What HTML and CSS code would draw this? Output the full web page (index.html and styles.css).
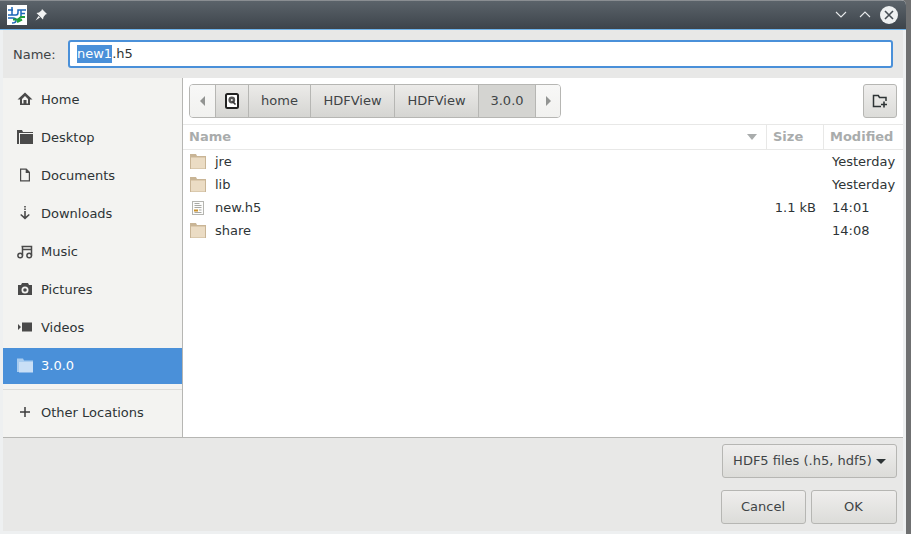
FILE: index.html
```html
<!DOCTYPE html>
<html lang="en">
<head>
<meta charset="utf-8">
<title>HDFView save dialog</title>
<link rel="stylesheet" href="styles.css">
</head>
<body>
<div class="screen">
  <div class="frame">
    <header class="titlebar">
      <svg class="logo" width="20" height="20" viewBox="0 0 20 20">
        <rect width="20" height="20" fill="#fff"/>
        <path d="M1 5h5M5 2v8M1 10h8q2 0 2-2.500V5h8M14 5v7M14 8.500h4" fill="none" stroke="#1c68b8" stroke-width="1.500"/>
        <path d="M1 13h5q3 0 3 2.500T5 18" fill="none" stroke="#1c68b8" stroke-width="1.500"/>
        <path d="M6 14.500h5l3-2.500h4M10 17l5-2.500" fill="none" stroke="#1f9e3c" stroke-width="2"/>
      </svg>
      <svg class="pin" width="12" height="12" viewBox="0 0 12 12"><path d="M7 0l5 5-1.500 .5L8.500 8 8 10.500 1.500 4 4 3.500 6.500 1.500zM3.500 7 .5 11.500 5 8.500z" fill="#f2f3f3"/></svg>
      <div class="wm-buttons">
        <svg width="14" height="14" viewBox="0 0 14 14"><path d="M2 4l5 5 5-5" fill="none" stroke="#e6e8ea" stroke-width="1.100"/></svg>
        <svg width="14" height="14" viewBox="0 0 14 14"><path d="M2 9l5-5 5 5" fill="none" stroke="#e6e8ea" stroke-width="1.100"/></svg>
        <svg class="wm-close" width="18" height="18" viewBox="0 0 18 18"><circle cx="9" cy="9" r="9" fill="#eef0f1"/><path d="M5 5l8 8M13 5l-8 8" stroke="#474e55" stroke-width="1.600"/></svg>
      </div>
    </header>
    <div class="dialog">
      <div class="name-row">
        <label class="name-label">Name:</label>
        <div class="name-input"><span class="sel">new1</span>.h5</div>
      </div>
      <div class="middle">
        <aside class="sidebar">
          <ul class="places">
            <li class="place"><svg class="ico" width="16" height="16" viewBox="0 0 16 16"><path d="M8 1.500 .5 8.500h2.500V14h10V8.500h2.500zM5 8l3-3 3 3v4.500H9.500V9h-3v3.500H5z" fill="#4a4a4a" fill-rule="evenodd"/></svg>Home</li>
            <li class="place"><svg class="ico" width="16" height="16" viewBox="0 0 16 16"><path d="M0 1h5l1 2H16v1H2v11H0zM3 5h13v10H3z" fill="#4a4a4a"/></svg>Desktop</li>
            <li class="place"><svg class="ico" width="16" height="16" viewBox="0 0 16 16"><path d="M3 1.500h6.500L13 5v9.500H3zM4.200 2.700v10.600h7.600V6H8.700V2.700z" fill="#4a4a4a" fill-rule="evenodd"/></svg>Documents</li>
            <li class="place"><svg class="ico" width="16" height="16" viewBox="0 0 16 16"><path d="M7.200 1h1.600v1.500H7.200zM7.200 3.500h1.600V5H7.200zM7.200 6h1.600v5.500l3-2.500 1 1L8 14.500 3.200 10l1-1 3 2.500z" fill="#4a4a4a"/></svg>Downloads</li>
            <li class="place"><svg class="ico" width="16" height="16" viewBox="0 0 16 16"><path d="M4.500 3.500h10v9M5.500 3.500v9M5.500 6.500h9" fill="none" stroke="#4a4a4a" stroke-width="1.500"/><circle cx="3.200" cy="12.500" r="2.300" fill="none" stroke="#4a4a4a" stroke-width="1.500"/><circle cx="12.200" cy="12.500" r="2.300" fill="none" stroke="#4a4a4a" stroke-width="1.500"/></svg>Music</li>
            <li class="place"><svg class="ico" width="16" height="16" viewBox="0 0 16 16"><path d="M1 4h3l1-2h6l1 2h3v10H1zM8 5.500a3.500 3.500 0 1 0 0 7 3.500 3.500 0 0 0 0-7zM8 7.200a1.800 1.800 0 1 1 0 3.600 1.800 1.800 0 0 1 0-3.600z" fill="#4a4a4a" fill-rule="evenodd"/></svg>Pictures</li>
            <li class="place"><svg class="ico" width="16" height="16" viewBox="0 0 16 16"><path d="M5 3.500h10v9H5zM1 5l3 3-3 3z" fill="#4a4a4a"/></svg>Videos</li>
            <li class="place place-active"><svg class="ico" width="16" height="16" viewBox="0 0 16 16"><path d="M0 1.500h6l1 2h9v2H2V15H0z" fill="#a8ccf0"/><path d="M2 5h14v10.500H2z" fill="#c9dff6"/></svg>3.0.0</li>
          </ul>
          <div class="side-sep"></div>
          <div class="place place-other"><svg class="ico" width="16" height="16" viewBox="0 0 16 16"><path d="M3 8h10M8 3v10" stroke="#3c3c3c" stroke-width="1.500"/></svg>Other Locations</div>
        </aside>
        <main class="browser">
          <div class="toolbar">
            <nav class="pathbar">
              <div class="seg seg-nav seg-first"><span class="tri tri-left"></span></div>
              <div class="seg seg-dark seg-disk"><svg width="16" height="16" viewBox="0 0 16 16"><rect x="2" y="1" width="12" height="14" rx="1.500" fill="#fff" stroke="#222" stroke-width="2"/><circle cx="7.800" cy="7" r="3.400" fill="#555"/><circle cx="7.800" cy="7" r="1" fill="#eee"/><path d="M8.500 8.500l3 3" stroke="#333" stroke-width="1.600"/></svg></div>
              <div class="seg seg-dark seg-home">home</div>
              <div class="seg seg-dark seg-hdf">HDFView</div>
              <div class="seg seg-dark seg-hdf">HDFView</div>
              <div class="seg seg-current">3.0.0</div>
              <div class="seg seg-nav seg-last"><span class="tri tri-right"></span></div>
            </nav>
            <button class="new-folder"><svg width="16" height="16" viewBox="0 0 16 16"><path d="M9 13.500H1.500V2.500h4.800l1.200 2h6.500V8" fill="none" stroke="#2e3436" stroke-width="1.500"/><path d="M12 8.500v6M9 11.500h6" stroke="#2e3436" stroke-width="1.600"/></svg></button>
          </div>
          <div class="table-head">
            <div class="th th-name">Name<span class="sort-arrow"></span></div>
            <div class="th th-size">Size</div>
            <div class="th th-mod">Modified</div>
          </div>
          <div class="rows">
            <div class="row"><div class="cell-name"><svg class="fold" width="16" height="16" viewBox="0 0 16 16"><use href="#folder"/></svg>jre</div><div class="cell-size"></div><div class="cell-mod">Yesterday</div></div>
            <div class="row"><div class="cell-name"><svg class="fold" width="16" height="16" viewBox="0 0 16 16"><use href="#folder"/></svg>lib</div><div class="cell-size"></div><div class="cell-mod">Yesterday</div></div>
            <div class="row"><div class="cell-name"><svg class="fold" width="16" height="16" viewBox="0 0 16 16"><rect x="2.500" y="1.500" width="11" height="13" fill="#fdfdfc" stroke="#b5b5b0"/><path d="M4.500 3.500h5M4.500 5.500h7M4.500 7.500h7M9 10h2.500M4.500 12.500h7" stroke="#a9a9a4"/><rect x="4" y="9.500" width="4" height="2" fill="#c9912d"/></svg>new.h5</div><div class="cell-size">1.1 kB</div><div class="cell-mod">14:01</div></div>
            <div class="row"><div class="cell-name"><svg class="fold" width="16" height="16" viewBox="0 0 16 16"><use href="#folder"/></svg>share</div><div class="cell-size"></div><div class="cell-mod">14:08</div></div>
          </div>
        </main>
      </div>
      <footer class="footer">
        <button class="btn btn-filter">HDF5 files (.h5, hdf5)<span class="caret"></span></button>
        <div class="actions">
          <button class="btn btn-cancel">Cancel</button>
          <button class="btn btn-ok">OK</button>
        </div>
      </footer>
    </div>
  </div>
</div>
<svg class="defs" width="0" height="0">
  <defs>
    <g id="folder">
      <path d="M0 0h6l1 2h9v13H0z" fill="#c9b596"/>
      <path d="M1 3h14v11.500H1z" fill="#ebdcc4"/>
      <path d="M1 3h14v1H1z" fill="#dccaae"/>
    </g>
  </defs>
</svg>
</body>
</html>
```

FILE: styles.css
```css
* { box-sizing: border-box; }
html, body { margin: 0; padding: 0; }
body { font-family: "DejaVu Sans", sans-serif; font-size: 13px; color: #2e3436; overflow: hidden; }
button { font: inherit; color: inherit; }
ul { list-style: none; margin: 0; padding: 0; }
.defs { position: absolute; }

.screen { width: 911px; height: 534px; background: #6f7071; display: flex; }
.frame { width: 906px; height: 534px; background: #eef0f1; display: flex; flex-direction: column; border-top-right-radius: 5px; overflow: hidden; }

.titlebar { height: 30px; flex: none; display: flex; align-items: center; padding: 0 8px 0 7px; background: linear-gradient(#5b636a, #3d444b); border-top: 1px solid #8a8e92; border-bottom: 1px solid #6fb3ea; }
.logo { display: block; }
.pin { margin-left: 8px; }
.wm-buttons { margin-left: auto; display: flex; align-items: center; gap: 10px; }
.wm-close { margin-left: -2px; }

.dialog { flex: 1; margin: 0 3px 3px; display: flex; flex-direction: column; min-height: 0; }

.name-row { height: 48px; flex: none; background: #e8e8e7; display: flex; align-items: center; padding: 0 10px 0 10px; }
.name-label { width: 55px; color: #3f4446; }
.name-input { width: 825px; height: 28px; background: #fff; border: 2px solid #4a90d9; border-radius: 3px; padding: 0 7px; line-height: 23px; }
.sel { background: #4a90d9; color: #fff; display: inline-block; line-height: 18px; }

.middle { flex: 1; display: flex; min-height: 0; border-bottom: 1px solid #b6b6b3; }
.sidebar { width: 180px; flex: none; background: #f3f3f1; border-right: 1px solid #b6b6b3; padding-top: 4px; }
.places { display: flex; flex-direction: column; gap: 2px; }
.place { height: 36px; display: flex; align-items: center; padding: 0 0 2px 14px; color: #2e3436; }
.ico { margin-right: 8px; flex: none; }
.place-active { background: #4a90d9; color: #fff; padding-bottom: 2px; }
.side-sep { height: 1px; background: #dcdcd9; margin-top: 5px; }
.place-other { height: 44px; padding-bottom: 0; }

.browser { flex: 1; background: #fff; display: flex; flex-direction: column; min-width: 0; }
.toolbar { height: 47px; flex: none; display: flex; justify-content: space-between; align-items: flex-start; padding: 6px 6px 0 6px; border-bottom: 1px solid #e8e8e7; }
.pathbar { display: flex; height: 34px; border: 1px solid #b6b6b3; border-radius: 4px; overflow: hidden; }
.seg { display: flex; align-items: center; justify-content: center; border-right: 1px solid #b6b6b3; color: #3f4446; padding-bottom: 1px; }
.seg-nav { background: linear-gradient(#f8f8f7, #f1f1ef); }
.seg-first { width: 26px; }
.seg-last { width: 24px; border-right: 0; }
.seg-dark { background: linear-gradient(#ecebe9, #d5d5d2); }
.seg-disk { width: 33px; }
.seg-home { width: 62px; }
.seg-hdf { width: 84px; }
.seg-current { width: 57px; background: #d4d4d1; }
.tri { width: 0; height: 0; border-top: 5px solid transparent; border-bottom: 5px solid transparent; }
.tri-left { border-right: 5px solid #929492; }
.tri-right { border-left: 5px solid #929492; }
.new-folder { width: 34px; height: 34px; padding: 0; display: flex; align-items: center; justify-content: center; border: 1px solid #b6b6b3; border-radius: 3px; background: linear-gradient(#efeeed, #dcdcd9); }

.table-head { height: 25px; flex: none; display: grid; grid-template-columns: 584px 57px 1fr; border-bottom: 1px solid #e8e8e7; color: #a9acac; font-weight: 700; }
.th { display: flex; align-items: center; padding-left: 6px; padding-bottom: 2px; }
.th-name { justify-content: space-between; padding-right: 9px; border-right: 1px solid #e8e8e7; }
.th-size { border-right: 1px solid #e8e8e7; }
.sort-arrow { width: 0; height: 0; border-left: 5px solid transparent; border-right: 5px solid transparent; border-top: 6px solid #a9acac; margin-top: 2px; }

.rows { display: flex; flex-direction: column; }
.row { height: 23px; display: grid; grid-template-columns: 584px 57px 1fr; align-items: center; }
.cell-name { display: flex; align-items: center; padding-left: 7px; }
.fold { margin-right: 9px; flex: none; }
.cell-size { text-align: right; padding-right: 8px; }
.cell-mod { padding-left: 8px; white-space: nowrap; }

.footer { height: 93px; flex: none; background: #e8e8e7; display: flex; flex-direction: column; align-items: flex-end; padding: 6px 6px 7px; gap: 12px; }
.btn { height: 34px; border: 1px solid #b6b6b3; border-radius: 3px; background: linear-gradient(#efeeed, #dcdcd9); color: #3f4446; padding: 0 1px 1px 0; display: flex; align-items: center; justify-content: center; }
.btn-filter { width: 175px; padding-right: 0; }
.caret { width: 0; height: 0; border-left: 5px solid transparent; border-right: 5px solid transparent; border-top: 5px solid #2e3436; margin-left: 4px; margin-top: 2px; }
.actions { display: flex; gap: 5px; }
.btn-cancel { width: 85px; }
.btn-ok { width: 86px; }
```
